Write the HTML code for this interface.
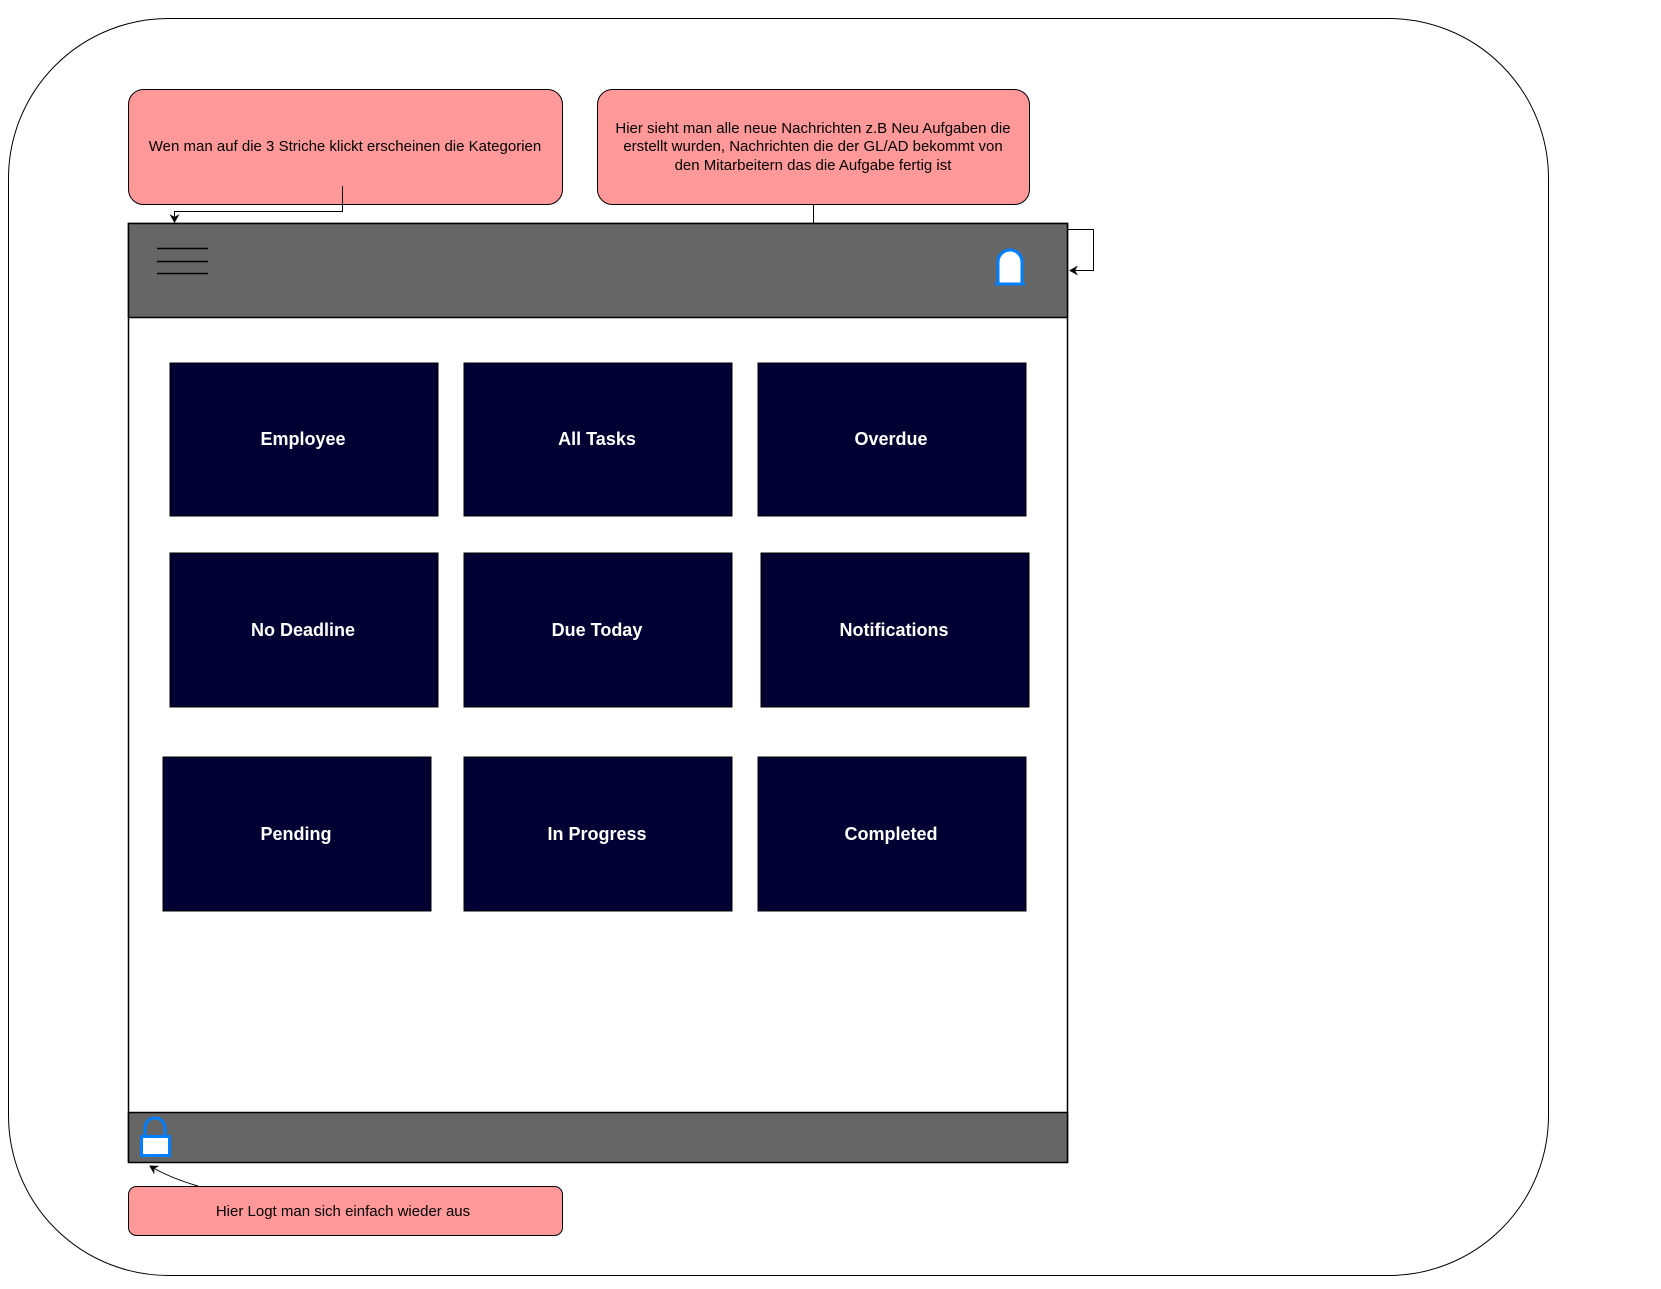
<!DOCTYPE html>
<html><head><meta charset="utf-8"><style>
html,body{margin:0;padding:0;background:#fff;width:1661px;height:1289px;overflow:hidden;font-family:"Liberation Sans",sans-serif}
</style></head><body>
<svg width="1661" height="1289" viewBox="0 0 1661 1289" xmlns="http://www.w3.org/2000/svg" font-family="Liberation Sans, sans-serif">
<defs><marker id="a" markerWidth="10" markerHeight="10" refX="8" refY="5" orient="auto" markerUnits="userSpaceOnUse"><path d="M0,0 L9,5 L0,10 L3,5 z" fill="#000"/></marker></defs>
<rect x="8.5" y="18.5" width="1540" height="1257" rx="160" fill="#fff" stroke="#000" stroke-width="1"/>
<rect x="128.5" y="89.5" width="434" height="115" rx="15" fill="#f99" stroke="#000"/>
<text x="345" y="151" font-size="15" text-anchor="middle">Wen man auf die 3 Striche klickt erscheinen die Kategorien</text>
<rect x="597.5" y="89.5" width="432" height="115" rx="15" fill="#f99" stroke="#000"/>
<text x="813" y="133" font-size="15" text-anchor="middle">Hier sieht man alle neue Nachrichten z.B Neu Aufgaben die</text>
<text x="813" y="151" font-size="15" text-anchor="middle">erstellt wurden, Nachrichten die der GL/AD bekommt von</text>
<text x="813" y="170" font-size="15" text-anchor="middle">den Mitarbeitern das die Aufgabe fertig ist</text>
<rect x="128.5" y="223.5" width="939" height="938" fill="#fff" stroke="#000" stroke-width="1.5"/>
<rect x="128.5" y="223.5" width="939" height="94" fill="#666" stroke="#000" stroke-width="1.5"/>
<rect x="128.5" y="1112.5" width="939" height="50" fill="#666" stroke="#000" stroke-width="1.5"/>
<path d="M157 248.5H208M157 261.5H208M157 273.5H208" stroke="#000" stroke-width="1.5"/>
<path d="M342.5 186V211.5H174.5V222" fill="none" stroke="#000" marker-end="url(#a)"/>
<path d="M813.5 204V223" stroke="#000"/>
<path d="M1068 229.5H1093.5V270.5H1070" fill="none" stroke="#000" marker-end="url(#a)"/>
<path d="M198 1186 Q170 1178 150 1166" fill="none" stroke="#000" marker-end="url(#a)"/>
<path d="M998 284V262 A12 12 0 0 1 1022 262V284Z" fill="#fff" stroke="#007fff" stroke-width="3"/>
<path d="M995 284H1025" stroke="#007fff" stroke-width="3"/>
<path d="M145 1136V1128 A10 10 0 0 1 165 1128V1136" fill="none" stroke="#007fff" stroke-width="3"/>
<rect x="141.5" y="1136.5" width="28" height="19" fill="#fff" stroke="#007fff" stroke-width="3"/>
<rect x="128.5" y="1186.5" width="434" height="49" rx="8" fill="#f99" stroke="#000"/>
<text x="343" y="1216" font-size="15" text-anchor="middle">Hier Logt man sich einfach wieder aus</text>
<g fill="#000033" stroke="#000">
<rect x="170" y="363" width="268" height="153"/><rect x="464" y="363" width="268" height="153"/><rect x="758" y="363" width="268" height="153"/>
<rect x="170" y="553" width="268" height="154"/><rect x="464" y="553" width="268" height="154"/><rect x="761" y="553" width="268" height="154"/>
<rect x="163" y="757" width="268" height="154"/><rect x="464" y="757" width="268" height="154"/><rect x="758" y="757" width="268" height="154"/>
</g>
<g fill="#fff" font-size="18" font-weight="bold" text-anchor="middle">
<text x="303" y="445">Employee</text><text x="597" y="445">All Tasks</text><text x="891" y="445">Overdue</text>
<text x="303" y="636">No Deadline</text><text x="597" y="636">Due Today</text><text x="894" y="636">Notifications</text>
<text x="296" y="840">Pending</text><text x="597" y="840">In Progress</text><text x="891" y="840">Completed</text>
</g>
</svg>
</body></html>
